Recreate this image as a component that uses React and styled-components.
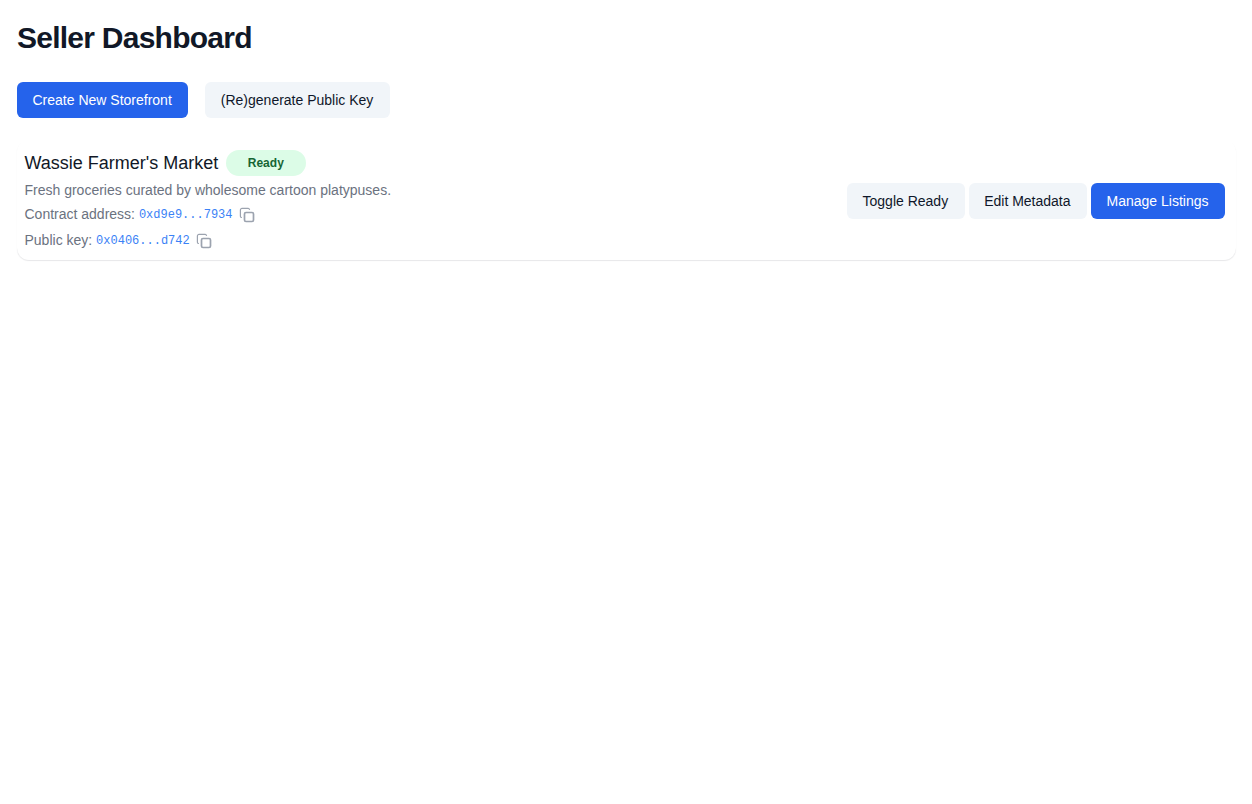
import React from 'react';
import styled, { createGlobalStyle } from 'styled-components';

const GlobalStyle = createGlobalStyle`
  html, body {
    margin: 0;
    padding: 0;
    background: #fff;
    font-family: 'Liberation Sans', Arial, sans-serif;
  }

  * {
    box-sizing: border-box;
  }
`;

const CopyIcon = () => (
  <CopySvg viewBox="0 0 16 16" fill="none">
    <rect x="5.5" y="5.5" width="9" height="9" rx="1.5" stroke="#9ca3af" strokeWidth="1.7" />
    <path d="M10.5 2.4A1.5 1.5 0 0 0 9.2 1.4H3A1.6 1.6 0 0 0 1.4 3v6.2a1.5 1.5 0 0 0 1 1.3" stroke="#9ca3af" strokeWidth="1.2" strokeLinecap="round" />
  </CopySvg>
);

export default function App() {
  return (
    <>
      <GlobalStyle />
      <Page>
        <Title>Seller Dashboard</Title>

        <Toolbar>
          <Button $primary>Create New Storefront</Button>
          <Button>(Re)generate Public Key</Button>
        </Toolbar>

        <Card>
          <Info>
            <NameRow>
              <Name>Wassie Farmer's Market</Name>
              <Badge>Ready</Badge>
            </NameRow>
            <Description>Fresh groceries curated by wholesome cartoon platypuses.</Description>
            <MetaRow>
              Contract address: <Code>0xd9e9...7934</Code>
              <CopyIcon />
            </MetaRow>
            <MetaRow>
              Public key: <Code>0x0406...d742</Code>
              <CopyIcon />
            </MetaRow>
          </Info>

          <Actions>
            <Button>Toggle Ready</Button>
            <Button>Edit Metadata</Button>
            <Button $primary>Manage Listings</Button>
          </Actions>
        </Card>
      </Page>
    </>
  );
}

const Page = styled.div`
  padding: 20px 16px 0 17px;
  min-height: 100vh;
`;

const Title = styled.h1`
  margin: 0;
  font-size: 30px;
  line-height: 36px;
  font-weight: 700;
  letter-spacing: -0.75px;
  color: #111827;
`;

const Toolbar = styled.div`
  display: flex;
  gap: 17px;
  margin-top: 26px;
`;

const Button = styled.button`
  height: 36px;
  padding: 0 16.5px 0 15.5px;
  border: none;
  border-radius: 6px;
  font-family: inherit;
  font-size: 14px;
  white-space: nowrap;
  background: ${(p) => (p.$primary ? '#2563eb' : '#f1f5f9')};
  color: ${(p) => (p.$primary ? '#fff' : '#0f172a')};
`;

const Card = styled.div`
  display: flex;
  align-items: center;
  justify-content: space-between;
  margin-top: 22px;
  padding: 10px 11px 7px 7.5px;
  border-radius: 12px;
  box-shadow: 0 1px 1px rgba(15, 23, 42, 0.1);
`;

const Info = styled.div`
  display: flex;
  flex-direction: column;
`;

const NameRow = styled.div`
  display: flex;
  align-items: center;
  gap: 7.5px;
`;

const Name = styled.span`
  font-size: 18px;
  line-height: 26px;
  color: #111827;
`;

const Badge = styled.span`
  display: flex;
  align-items: center;
  justify-content: center;
  width: 80px;
  height: 26px;
  padding-bottom: 1px;
  border-radius: 13px;
  background: #dcfce7;
  color: #166534;
  font-size: 12px;
  font-weight: 700;
`;

const Description = styled.p`
  margin: 4px 0 1px;
  font-size: 14px;
  line-height: 20px;
  color: #6b7280;
`;

const MetaRow = styled.div`
  display: flex;
  align-items: center;
  white-space: pre;
  height: 26px;
  font-size: 14px;
  color: #6b7280;
`;

const Code = styled.code`
  font-family: 'Liberation Mono', monospace;
  font-size: 12px;
  color: #3b82f6;
  position: relative;
  top: 1px;
`;

const CopySvg = styled.svg`
  width: 16px;
  height: 16px;
  margin-left: 6.5px;
  position: relative;
  top: 1px;
`;

const Actions = styled.div`
  display: flex;
  gap: 4px;
  margin-bottom: 2px;
`;
